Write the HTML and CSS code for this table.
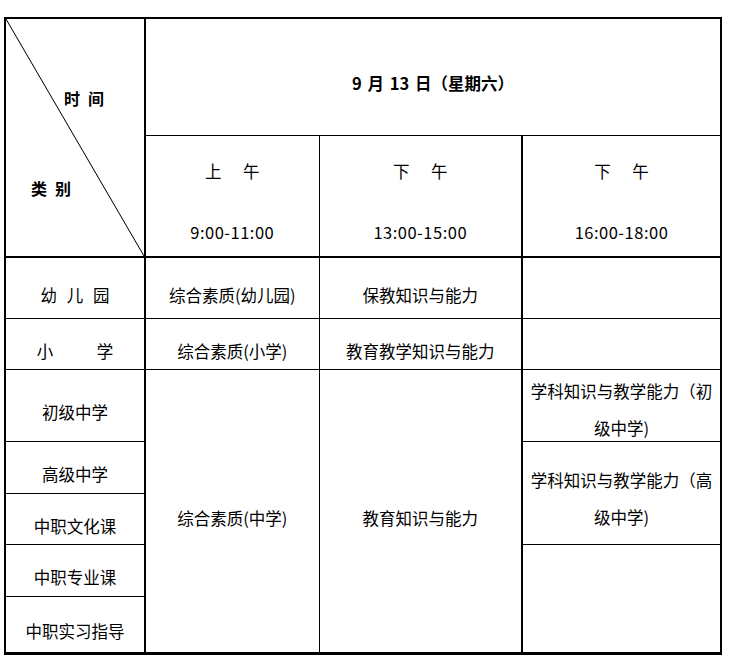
FILE: index.html
```html
<!DOCTYPE html>
<html lang="zh-CN">
<head>
<meta charset="utf-8">
<title>考试时间安排</title>
<link rel="stylesheet" href="styles.css">
</head>
<body>
<table class="sched">
  <colgroup>
    <col class="c0"><col class="c1"><col class="c2"><col class="c3">
  </colgroup>
  <tr class="r1">
    <td class="diag" rowspan="2">
      <div class="diag-in">
        <span class="lbl-time">时&ensp;间</span>
        <span class="lbl-cat">类&ensp;别</span>
      </div>
    </td>
    <td class="date" colspan="3">9 月 13 日（星期六）</td>
  </tr>
  <tr class="r2">
    <td class="slot"><div class="half">上 午</div><div class="time">9:00-11:00</div></td>
    <td class="slot"><div class="half">下 午</div><div class="time">13:00-15:00</div></td>
    <td class="slot thick-l"><div class="half">下 午</div><div class="time">16:00-18:00</div></td>
  </tr>
  <tr class="r3">
    <td class="cat"><span class="sp9">幼 儿 园</span></td>
    <td>综合素质(幼儿园)</td>
    <td>保教知识与能力</td>
    <td class="thick-l"></td>
  </tr>
  <tr class="r4">
    <td class="cat"><span class="sp44">小 学</span></td>
    <td>综合素质(小学)</td>
    <td>教育教学知识与能力</td>
    <td class="thick-l"></td>
  </tr>
  <tr class="r5">
    <td class="cat">初级中学</td>
    <td rowspan="5">综合素质(中学)</td>
    <td rowspan="5">教育知识与能力</td>
    <td class="thick-l two two-a"><div class="two-in">学科知识与教学能力（初级中学)</div></td>
  </tr>
  <tr class="r6">
    <td class="cat">高级中学</td>
    <td class="thick-l two two-b" rowspan="2"><div class="two-in">学科知识与教学能力（高级中学)</div></td>
  </tr>
  <tr class="r7">
    <td class="cat">中职文化课</td>
  </tr>
  <tr class="r8">
    <td class="cat">中职专业课</td>
    <td class="thick-l" rowspan="2"></td>
  </tr>
  <tr class="r9">
    <td class="cat">中职实习指导</td>
  </tr>
</table>
</body>
</html>
```

FILE: styles.css
```css
html, body {
  margin: 0;
  padding: 0;
  background: #fff;
}

body {
  font-family: "Noto Sans CJK SC", "Noto Sans", sans-serif;
  font-size: 16.5px;
  color: #000;
}

.sched {
  margin: 17px 0 0 4px;
  border-collapse: collapse;
  table-layout: fixed;
  width: 718px;
  border: 2px solid #000;
  border-bottom-width: 3px;
}

.c0 { width: 140px; }
.c1 { width: 174px; }
.c2 { width: 203px; }
.c3 { width: 199px; }

.sched td {
  border: 1px solid #000;
  padding: 14px 5px 0;
  text-align: center;
  vertical-align: middle;
  line-height: 24px;
}

.r1 { height: 117px; }
.r2 { height: 122px; }
.r3 { height: 61px; }
.r4 { height: 51px; }
.r5 { height: 72px; }
.r6 { height: 52px; }
.r7 { height: 51px; }
.r8 { height: 52px; }
.r9 { height: 57px; }

.sched td.cat { border-right-width: 2px; }
.sched td.thick-l { border-left-width: 2px; }

.sched td.diag {
  border-right-width: 2px;
  border-bottom-width: 2px;
  padding: 0;
  vertical-align: top;
  text-align: left;
  background: linear-gradient(to top right,
    transparent calc(50% - 0.9px),
    #000 50%,
    transparent calc(50% + 0.9px));
}

.diag-in {
  display: flex;
  flex-direction: column;
  align-items: flex-start;
  font-weight: 700;
  font-size: 16px;
}

.lbl-time {
  margin: 67px 0 0 58px;
}

.lbl-cat {
  margin: 66px 0 0 25px;
}

.sched td.date {
  font-weight: 700;
  padding-top: 13px;
  word-spacing: 2px;
}

.sched td.slot {
  vertical-align: top;
  padding: 23px 5px 0;
  border-bottom-width: 2px;
}

.half { word-spacing: 18px; }

.time {
  margin-top: 37px;
  letter-spacing: 0.5px;
}

.sp9 { word-spacing: 6px; }
.sp44 { word-spacing: 40px; }

.sched td.two {
  vertical-align: top;
  padding: 0 5px;
}

.two-in {
  line-height: 37px;
  margin-bottom: -12px;
}

.sched td.two-a { padding-top: 3px; }
.sched td.two-b { padding-top: 20px; }
```
